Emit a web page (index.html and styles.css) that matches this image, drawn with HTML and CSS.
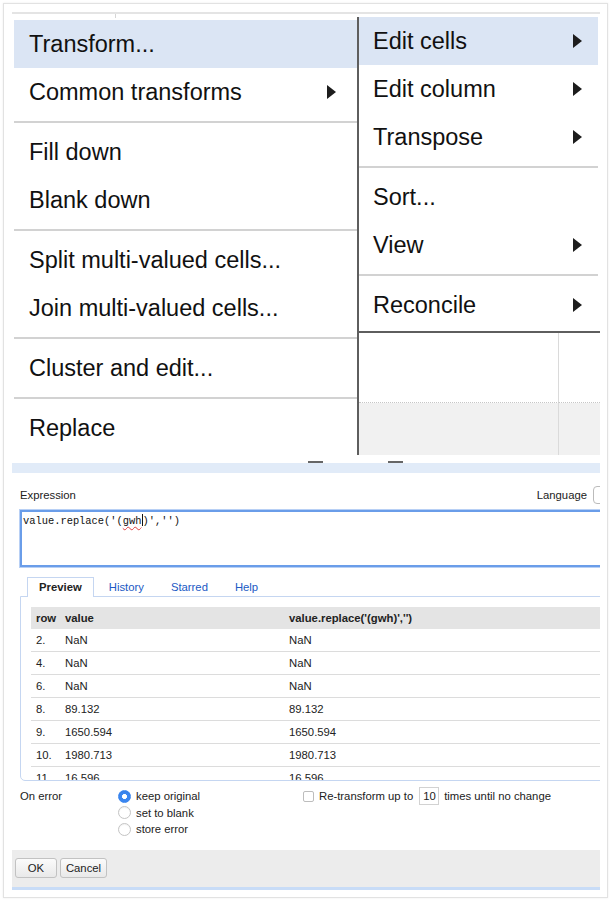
FILE: index.html
```html
<!DOCTYPE html>
<html>
<head>
<meta charset="utf-8">
<link rel="stylesheet" href="styles.css">
</head>
<body>
<div class="frame">
  <div class="shot-top">
    <div class="col-l">
      <div class="strip"><i class="tick"></i></div>
      <ul class="menu menu1">
        <li class="item hl">Transform...</li>
        <li class="item">Common transforms<span class="arrow"></span></li>
        <li class="sep"></li>
        <li class="item">Fill down</li>
        <li class="item">Blank down</li>
        <li class="sep"></li>
        <li class="item">Split multi-valued cells...</li>
        <li class="item">Join multi-valued cells...</li>
        <li class="sep"></li>
        <li class="item">Cluster and edit...</li>
        <li class="sep"></li>
        <li class="item">Replace</li>
      </ul>
    </div>
    <div class="col-r">
      <div class="strip strip-r"></div>
      <div class="rbox">
        <ul class="menu menu2">
          <li class="item hl">Edit cells<span class="arrow"></span></li>
          <li class="item">Edit column<span class="arrow"></span></li>
          <li class="item">Transpose<span class="arrow"></span></li>
          <li class="sep"></li>
          <li class="item">Sort...</li>
          <li class="item">View<span class="arrow"></span></li>
          <li class="sep"></li>
          <li class="item">Reconcile<span class="arrow"></span></li>
        </ul>
        <div class="grid">
          <div class="g1"></div><div class="g2"></div>
          <div class="g3"></div><div class="g4"></div>
        </div>
      </div>
    </div>
  </div>

  <div class="dlg">
    <div class="frags"><i></i><i></i></div>
    <div class="dlg-head"></div>
    <div class="dlg-body">
      <div class="expr-row">
        <span>Expression</span>
        <span class="lang-label">Language</span>
        <span class="lang-sel"></span>
      </div>
      <div class="code">value.replace('(<span class="squig">gwh</span><span class="caret"></span>)','')</div>
      <div class="tabs">
        <span class="tab active">Preview</span>
        <span class="tab">History</span>
        <span class="tab">Starred</span>
        <span class="tab">Help</span>
      </div>
      <div class="panel">
        <div class="trow thead"><span>row</span><span>value</span><span>value.replace('(gwh)','')</span></div>
        <div class="trow"><span>2.</span><span>NaN</span><span>NaN</span></div>
        <div class="trow"><span>4.</span><span>NaN</span><span>NaN</span></div>
        <div class="trow"><span>6.</span><span>NaN</span><span>NaN</span></div>
        <div class="trow"><span>8.</span><span>89.132</span><span>89.132</span></div>
        <div class="trow"><span>9.</span><span>1650.594</span><span>1650.594</span></div>
        <div class="trow"><span>10.</span><span>1980.713</span><span>1980.713</span></div>
        <div class="trow"><span>11.</span><span>16.596</span><span>16.596</span></div>
      </div>
      <div class="onerr">
        <div class="oe-label">On error</div>
        <div class="radios">
          <div class="radio-row"><span class="radio on"></span>keep original</div>
          <div class="radio-row"><span class="radio"></span>set to blank</div>
          <div class="radio-row"><span class="radio"></span>store error</div>
        </div>
        <div class="retrans">
          <span class="chk"></span>Re-transform up to<span class="num">10</span>times until no change
        </div>
      </div>
    </div>
    <div class="btnbar">
      <span class="btn ok">OK</span><span class="btn cancel">Cancel</span>
    </div>
    <div class="btnline"></div>
  </div>
</div>
</body>
</html>
```

FILE: styles.css
```css
body {
  margin: 0;
  background: #fff;
  font-family: "Liberation Sans", Arial, sans-serif;
  color: #111;
}
.frame {
  box-sizing: border-box;
  width: 605px;
  height: 895px;
  margin: 3px;
  border: 1px solid #e2e2e2;
  box-shadow: 0 0 2px rgba(0, 0, 0, 0.08);
  padding: 8px 7px 0 8px;
}

/* ---------- top: menus ---------- */
.shot-top {
  display: grid;
  grid-template-columns: 345px 243px;
  height: 443px;
  overflow: hidden;
}
.strip {
  box-sizing: border-box;
  height: 8px;
  border-top: 2px solid #e4e4e4;
}
.strip-r { height: 5px; }
.tick {
  display: block;
  width: 1px;
  height: 4px;
  margin-left: 103px;
  background: #d6d6d6;
}
.menu {
  list-style: none;
  margin: 0;
  padding: 0;
  font-size: 23.5px;
  color: #111;
}
.menu1 { margin-left: 2px; }
.item {
  height: 48px;
  display: flex;
  align-items: center;
  justify-content: space-between;
  white-space: nowrap;
}
.menu1 .item { padding: 0 21px 0 15px; }
.hl { background: #dbe5f4; }
.sep {
  height: 2px;
  margin: 5px 0;
  background: #d2d2d2;
}
.arrow {
  flex: none;
  width: 0;
  height: 0;
  border-left: 9px solid #1d1d1d;
  border-top: 7px solid transparent;
  border-bottom: 7px solid transparent;
}
.rbox {
  box-sizing: border-box;
  height: 438px;
  border-left: 2px solid #5e5e5e;
  display: flex;
  flex-direction: column;
}
.menu2 {
  border-bottom: 2px solid #5e5e5e;
  padding-bottom: 2px;
}
.menu2 .item {
  margin-right: 2px;
  padding: 0 16px 0 14px;
}
.menu2 .sep { margin-right: 2px; }
.grid {
  flex: 1;
  display: grid;
  grid-template-columns: 200px 1fr;
  grid-template-rows: 70px 1fr;
}
.g1 { border-right: 1px solid #dadada; border-bottom: 1px dotted #c6c6c6; }
.g2 { border-bottom: 1px dotted #c6c6c6; }
.g3 { border-right: 1px solid #dadada; background: #f1f1f1; }
.g4 { background: #f1f1f1; }

/* ---------- bottom: dialog ---------- */
.dlg {
  overflow: hidden;
  font-size: 11.3px;
  color: #222;
}
.frags {
  height: 8px;
  display: flex;
}
.frags i {
  display: block;
  width: 15px;
  height: 2px;
  margin-top: 6px;
  background: #666;
}
.frags i:first-child { margin-left: 296px; }
.frags i + i { margin-left: 65px; }
.dlg-head {
  height: 10px;
  background: #e1ebf8;
}
.dlg-body { padding-left: 8px; }
.expr-row {
  margin-top: 13px;
  height: 18px;
  display: flex;
  align-items: center;
}
.lang-label { margin-left: auto; }
.lang-sel {
  box-sizing: border-box;
  width: 60px;
  height: 18px;
  margin-left: 6px;
  margin-right: -53px;
  border: 1px solid #bbb;
  border-radius: 4px;
}
.code {
  box-sizing: border-box;
  margin-top: 6px;
  width: 640px;
  height: 57px;
  border: 2px solid #6a9de9;
  box-shadow: 0 0 0 1px #b8d0f5;
  padding: 2px 1px;
  font-family: "Liberation Mono", "Courier New", monospace;
  font-size: 10.4px;
  line-height: 13px;
  color: #111;
  white-space: pre;
}
.squig {
  text-decoration: underline wavy #e04040;
  text-decoration-thickness: 1px;
  text-underline-offset: 2px;
}
.caret {
  display: inline-block;
  width: 1px;
  height: 12px;
  background: #111;
  vertical-align: -2px;
}
.tabs {
  margin-top: 10px;
  height: 19px;
  display: flex;
  padding-left: 7px;
}
.tab {
  box-sizing: border-box;
  height: 19px;
  padding: 0 11px;
  border: 1px solid transparent;
  border-bottom: 0;
  line-height: 19px;
  margin-right: 3px;
  color: #2159c4;
}
.tab.active {
  height: 20px;
  border-color: #c5d6f1;
  background: #fff;
  font-weight: bold;
  color: #222;
  position: relative;
  z-index: 1;
}
.panel {
  box-sizing: border-box;
  width: 640px;
  height: 185px;
  border: 1px solid #c5d6f1;
  border-radius: 0 0 0 5px;
  padding: 10px 0 0 10px;
  overflow: hidden;
}
.trow {
  box-sizing: border-box;
  display: grid;
  grid-template-columns: 29px 224px 1fr;
  height: 23px;
  align-items: center;
  border-bottom: 1px solid #dcdcdc;
}
.trow span { padding-left: 5px; white-space: nowrap; }
.thead {
  height: 22px;
  background: #e4e4e4;
  font-weight: bold;
  border-bottom: 0;
}
.onerr {
  box-sizing: border-box;
  height: 69px;
  padding-top: 7px;
  display: flex;
}
.oe-label {
  width: 98px;
  line-height: 16.5px;
}
.radios { width: 185px; }
.radio-row {
  height: 16.5px;
  display: flex;
  align-items: center;
}
.radio {
  box-sizing: border-box;
  width: 13px;
  height: 13px;
  border-radius: 50%;
  border: 1px solid #c4c4c4;
  background: #fff;
  margin-right: 5px;
  box-shadow: inset 0 1px 1px rgba(0,0,0,0.05);
}
.radio.on {
  border-color: #3a86f0;
  background: radial-gradient(circle, #fff 0 2.2px, #3a86f0 2.7px);
}
.retrans {
  height: 16.5px;
  display: flex;
  align-items: center;
  white-space: nowrap;
}
.chk {
  box-sizing: border-box;
  width: 11px;
  height: 11px;
  border: 1px solid #bdbdbd;
  border-radius: 2px;
  margin-right: 5px;
}
.num {
  box-sizing: border-box;
  width: 20px;
  height: 18px;
  border: 1px solid #d2d2d2;
  padding-left: 3px;
  line-height: 16px;
  margin: 0 5px 0 6px;
}
.btnbar {
  box-sizing: border-box;
  height: 37px;
  background: #ececec;
  padding: 8px 0 0 3px;
  display: flex;
  align-items: flex-start;
}
.btn {
  box-sizing: border-box;
  height: 20px;
  line-height: 18px;
  text-align: center;
  border: 1px solid #c2c2c2;
  border-radius: 3px;
  background: linear-gradient(#fbfbfb, #e9e9e9);
  margin-right: 3px;
  color: #222;
}
.ok { width: 42px; }
.cancel { width: 47px; }
.btnline {
  height: 3px;
  background: #c8dcf7;
}
```
